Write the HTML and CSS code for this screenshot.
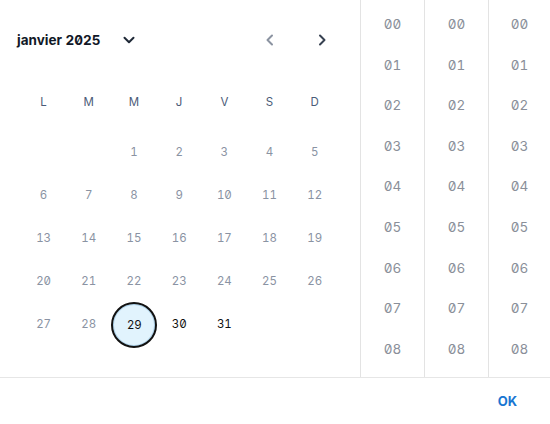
FILE: index.html
```html
<!DOCTYPE html>
<html lang="fr">
<head>
    <meta charset="UTF-8">
    <meta name="viewport" content="width=device-width, initial-scale=1.0">
    <title>Date et heure</title>
    <link rel="stylesheet" href="styles.css">
</head>
<body>
    <div class="picker">
        <div class="panes">
            <div class="calendar">
                <div class="cal-header">
                    <button class="month-btn">janvier 2025
                        <svg width="14" height="14" viewBox="0 0 14 14"><path d="M2.5 4.8 L7 9.2 L11.5 4.8" fill="none" stroke="#1f2937" stroke-width="2" stroke-linecap="round" stroke-linejoin="round"/></svg>
                    </button>
                    <div class="nav">
                        <button class="nav-btn muted"><svg width="12" height="14" viewBox="0 0 12 14"><path d="M8 2.5 L3.5 7 L8 11.5" fill="none" stroke="currentColor" stroke-width="2" stroke-linecap="round" stroke-linejoin="round"/></svg></button>
                        <button class="nav-btn"><svg width="12" height="14" viewBox="0 0 12 14"><path d="M4 2.5 L8.5 7 L4 11.5" fill="none" stroke="currentColor" stroke-width="2" stroke-linecap="round" stroke-linejoin="round"/></svg></button>
                    </div>
                </div>
                <div class="weekdays">
                    <span>L</span><span>M</span><span>M</span><span>J</span><span>V</span><span>S</span><span>D</span>
                </div>
                <div class="days">
                    <span></span><span></span>
                    <span class="off">1</span><span class="off">2</span><span class="off">3</span><span class="off">4</span><span class="off">5</span>
                    <span class="off">6</span><span class="off">7</span><span class="off">8</span><span class="off">9</span><span class="off">10</span><span class="off">11</span><span class="off">12</span>
                    <span class="off">13</span><span class="off">14</span><span class="off">15</span><span class="off">16</span><span class="off">17</span><span class="off">18</span><span class="off">19</span>
                    <span class="off">20</span><span class="off">21</span><span class="off">22</span><span class="off">23</span><span class="off">24</span><span class="off">25</span><span class="off">26</span>
                    <span class="off">27</span><span class="off">28</span><span class="selected">29</span><span>30</span><span>31</span>
                </div>
            </div>
            <div class="time-col">
                <span>00</span><span>01</span><span>02</span><span>03</span><span>04</span><span>05</span><span>06</span><span>07</span><span>08</span>
            </div>
            <div class="time-col">
                <span>00</span><span>01</span><span>02</span><span>03</span><span>04</span><span>05</span><span>06</span><span>07</span><span>08</span>
            </div>
            <div class="time-col last">
                <span>00</span><span>01</span><span>02</span><span>03</span><span>04</span><span>05</span><span>06</span><span>07</span><span>08</span>
            </div>
        </div>
        <div class="actions">
            <button class="ok">OK</button>
        </div>
    </div>
</body>
</html>
```
FILE: styles.css
```css
body { margin: 0; font-family: Inter, "Noto Sans", sans-serif; font-feature-settings: "tnum", "zero"; background: #fff; }
button { font-family: inherit; font-feature-settings: inherit; background: none; border: none; padding: 0; cursor: pointer; }

.picker { width: 550px; height: 424px; display: flex; flex-direction: column; }
.panes { display: flex; height: 377px; border-bottom: 1px solid #e6e6e6; }

.calendar { width: 360px; }
.cal-header { display: flex; align-items: center; justify-content: space-between; height: 40px; margin-top: 20px; padding: 0 32px 0 17px; }
.month-btn { display: flex; align-items: center; gap: 21px; font-size: 13.5px; font-weight: 700; color: #111827; }
.nav { display: flex; gap: 40px; }
.nav-btn { color: #374151; display: flex; }
.nav-btn.muted { color: #8b93a1; }

.weekdays, .days { display: grid; grid-template-columns: repeat(7, 45.2px); padding-left: 21px; }
.weekdays { margin-top: 22px; height: 40px; align-items: center; }
.weekdays span { text-align: center; font-size: 11.5px; color: #4b5b78; }
.days { grid-auto-rows: 43px; margin-top: 8px; }
.days span { display: flex; align-items: center; justify-content: center; font-size: 11.5px; color: #111; }
.days span.off { color: #8a93a3; }
.days span.selected { width: 42px; height: 42px; margin: auto; border-radius: 50%; border: 2px solid #111; background: #e1f3fd; box-shadow: inset 0 0 0 1px #a9d0ea; color: #111; }

.time-col { width: 63px; border-left: 1px solid #e3e3e3; display: flex; flex-direction: column; padding-top: 3.7px; overflow: hidden; }
.time-col.last { flex: 1; }
.time-col span { height: 40.6px; flex-shrink: 0; display: flex; align-items: center; justify-content: center; font-size: 13.5px; color: #8a8f99; }

.actions { flex: 1; display: flex; align-items: center; justify-content: flex-end; padding-right: 33px; }
.ok { font-size: 13px; font-weight: 700; color: #1976d2; }
```
